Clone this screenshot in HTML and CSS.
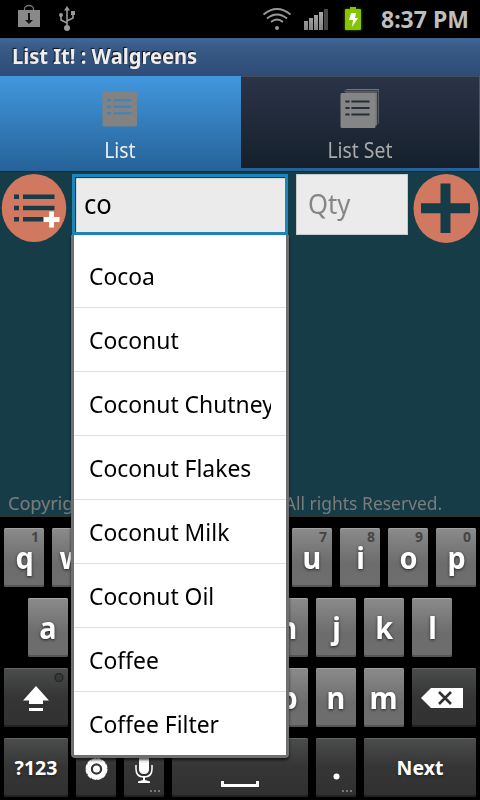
FILE: index.html
```html
<!DOCTYPE html>
<html lang="en">
<head>
<meta charset="utf-8">
<title>List It! : Walgreens</title>
<link rel="stylesheet" href="styles.css">
</head>
<body>
<div class="phone">
  <header class="status">
    <svg class="status-icon" width="90" height="38" viewBox="0 0 90 38">
      <path d="M24.500 10V9a4.500 3.500 0 0 1 9 0v1" fill="none" stroke="#777" stroke-width="1.300"/>
      <path d="M18 10h22v17H18z" fill="#898989"/>
      <path d="M28 13h2v7h3l-4 4-4-4h3z" fill="#111"/>
      <path d="M67 9v17M61 16v4l6 3M73 14v4l-6 3" fill="none" stroke="#999" stroke-width="1.600"/>
      <path d="M67 6l3 4.500h-6zM71 11h4v4h-4z" fill="#999"/>
      <circle cx="61" cy="15" r="2" fill="#999"/><circle cx="67" cy="28" r="3" fill="#999"/>
    </svg>
    <svg class="status-icon" width="110" height="38" viewBox="260 0 110 38">
      <defs>
        <linearGradient id="bars" x1="0" y1="0" x2="0" y2="1"><stop offset="0" stop-color="#aaa"/><stop offset="1" stop-color="#858585"/></linearGradient>
        <filter id="glow" x="-50%" y="-50%" width="200%" height="200%"><feGaussianBlur stdDeviation="1.600"/></filter>
      </defs>
      <g fill="none" stroke="#999" stroke-width="2">
        <path d="M263.500 14.500q13.500-11 27 0M267 18.500q10-8 20 0M271 22q6-5 12 0"/>
      </g>
      <circle cx="277" cy="28" r="2" fill="#999"/>
      <path d="M304 21h4v9h-4zM309 18h4v12h-4zM314 15h4v15h-4zM319 12h4v18h-4z" fill="url(#bars)"/>
      <path d="M324 9h4v21h-4z" fill="#484848"/>
      <path d="M345 9h16v21h-16z" fill="#80c800" opacity=".6" filter="url(#glow)"/>
      <path d="M346 9h4V7h6v2h4q1 0 1 1v19q0 1-1 1h-14q-1 0-1-1V10q0-1 1-1z" fill="#84c400"/>
      <path d="M351 13h5l-1 5h3l-6 9 1-7h-4z" fill="#fff"/>
    </svg>
    <span class="clock">8:37 PM</span>
  </header>
  <div class="titlebar"><h1 class="title">List It! : Walgreens</h1></div>
  <nav class="tabs">
    <div class="tab tab-active">
      <svg class="tab-icon" width="40" height="40" viewBox="0 0 40 40">
        <rect x="2.500" y="2.700" width="34.500" height="34.800" rx="1.500" fill="#828282"/>
        <path d="M7 11.300h4M13.500 11.300h18M7 17.800h4M13.500 17.800h18M7 24.300h4M13.500 24.300h18" stroke="#3f82bd" stroke-width="2"/>
      </svg>
      <span class="tab-label">List</span>
    </div>
    <div class="tab tab-set">
      <svg class="tab-icon" width="40" height="40" viewBox="0 0 40 40">
        <path d="M4 2L7 0h32v34l-3 3z" fill="#707477"/>
        <path d="M3 3h34.500v33M5 1.500h33v33" fill="none" stroke="#252d39" stroke-width=".7"/>
        <rect x=".5" y="4" width="35" height="35" rx="1.500" fill="#858585"/>
        <path d="M6.500 12.500h2M12.500 12.500h16M6.500 19h2M12.500 19h16M6.500 25.500h2M12.500 25.500h16" stroke="#252f3c" stroke-width="2.200" stroke-linecap="square"/>
      </svg>
      <span class="tab-label">List Set</span>
    </div>
  </nav>
  <main class="content">
    <div class="entry">
      <svg class="round" width="66" height="70" viewBox="0 0 66 70">
        <ellipse cx="33" cy="34" rx="32.300" ry="34" fill="#d17860"/>
        <path d="M13 22.700h5M22 22.700h31.500M13 34h5M22 34h31.500M13 45.300h5M22 45.300h22" stroke="#153c47" stroke-width="4.500"/>
        <path d="M50.500 37.500v16M42.500 45.500h16" stroke="#fff" stroke-width="4.800"/>
      </svg>
      <div class="field field-item"><span class="typed">co</span></div>
      <div class="field field-qty"><span class="hint">Qty</span></div>
      <svg class="round round-add" width="66" height="70" viewBox="0 0 66 70">
        <ellipse cx="33" cy="34.500" rx="32.500" ry="34.500" fill="#d17860"/>
        <path d="M32.500 9.500v49.500M8 34.300h49" stroke="#153c47" stroke-width="10"/>
      </svg>
    </div>
    <footer class="copyright"><span class="copy-left">Copyright</span><span class="copy-right">All rights Reserved.</span></footer>
  </main>
  <section class="keyboard">
    <div class="keys">
      <div class="key"><span class="letter">q</span><small>1</small></div><div class="key"><span class="letter">w</span></div><div class="key"></div><div class="key"></div><div class="key"></div><div class="key"></div><div class="key"><span class="letter">u</span><small>7</small></div><div class="key"><span class="letter">i</span><small>8</small></div><div class="key"><span class="letter">o</span><small>9</small></div><div class="key"><span class="letter">p</span><small>0</small></div>
    </div>
    <div class="keys keys-home">
      <div class="key"><span class="letter">a</span></div><div class="key"></div><div class="key"></div><div class="key"></div><div class="key"></div><div class="key"><span class="letter">h</span></div><div class="key"><span class="letter">j</span></div><div class="key"><span class="letter">k</span></div><div class="key"><span class="letter">l</span></div>
    </div>
    <div class="keys">
      <div class="key key-dark key-wide">
        <svg width="64" height="59" viewBox="0 0 64 59"><path d="M32 18l13 14.500h-6V36H25v-3.500h-6zM25 40h14v3H25z" fill="#fff"/><circle cx="55" cy="9.500" r="4" fill="#383838" stroke="#222" stroke-width="1.200"/></svg>
      </div>
      <div class="key"></div><div class="key"></div><div class="key"></div><div class="key"></div><div class="key"><span class="letter">b</span></div><div class="key"><span class="letter">n</span></div><div class="key"><span class="letter">m</span></div>
      <div class="key key-dark key-wide">
        <svg width="64" height="59" viewBox="0 0 64 59"><path d="M9 30l10-10h32v20H19z" fill="#fff"/><path d="M27 24l12 12M39 24L27 36" stroke="#303030" stroke-width="2.600"/></svg>
      </div>
    </div>
    <div class="keys">
      <div class="key key-dark key-wide key-word">?123</div>
      <div class="key key-dark">
        <svg width="40" height="59" viewBox="0 0 40 59"><circle cx="20.500" cy="31" r="8.500" fill="none" stroke="#fff" stroke-width="5" stroke-dasharray="3.800 .65"/><circle cx="20.500" cy="31" r="8" fill="none" stroke="#fff" stroke-width="4.500"/><circle cx="20.500" cy="31" r="3.500" fill="#fff"/></svg>
      </div>
      <div class="key key-dark">
        <svg width="40" height="59" viewBox="0 0 40 59"><rect x="15" y="14" width="10" height="22" rx="4.500" fill="#fff"/><path d="M12 27v4q0 8 8 8t8-8v-4" fill="none" stroke="#fff" stroke-width="1.500"/><path d="M19 38h2v4l5 1.500V45H14v-1.500l5-1.500z" fill="#fff"/><path d="M26 52h2v2h-2zM30 52h2v2h-2zM34 52h2v2h-2z" fill="#777"/></svg>
      </div>
      <div class="key key-dark key-space">
        <svg width="136" height="59" viewBox="0 0 136 59"><path d="M50.500 43v4.500h35V43" fill="none" stroke="#fff" stroke-width="3"/></svg>
      </div>
      <div class="key key-dark">
        <svg width="40" height="59" viewBox="0 0 40 59"><circle cx="20.500" cy="38.500" r="3" fill="#fff"/><path d="M26 52h2v2h-2zM30 52h2v2h-2zM34 52h2v2h-2z" fill="#777"/></svg>
      </div>
      <div class="key key-dark key-next key-word">Next</div>
    </div>
  </section>
  <ul class="suggestions">
    <li class="option"><div class="clip"><span class="option-text">Cocoa</span></div></li>
    <li class="option"><div class="clip"><span class="option-text">Coconut</span></div></li>
    <li class="option"><div class="clip"><span class="option-text">Coconut Chutney</span></div></li>
    <li class="option"><div class="clip"><span class="option-text">Coconut Flakes</span></div></li>
    <li class="option"><div class="clip"><span class="option-text">Coconut Milk</span></div></li>
    <li class="option"><div class="clip"><span class="option-text">Coconut Oil</span></div></li>
    <li class="option"><div class="clip"><span class="option-text">Coffee</span></div></li>
    <li class="option"><div class="clip"><span class="option-text">Coffee Filter</span></div></li>
  </ul>
</div>
</body>
</html>
```

FILE: styles.css
```css
* { box-sizing: border-box; }
body { margin: 0; background: #000; font-family: "Noto Sans", "Open Sans", sans-serif; }
svg { display: block; flex: none; }
.phone { position: relative; width: 480px; height: 800px; overflow: hidden; display: flex; flex-direction: column; }
.status { height: 38px; flex: none; display: flex; align-items: center; background: #000; }
.status-icon + .status-icon { margin-left: 170px; }
.clock { margin-left: 11px; color: #bebebe; font-size: 23px; font-weight: 700; line-height: 38px; white-space: nowrap; }
.titlebar { height: 38px; flex: none; padding-left: 12px; background: linear-gradient(#43669a, #395b87 20%, #2f4c77); border-top: 1px solid #3e608e; }
.title { margin: 0; font-size: 21.500px; line-height: 33px; font-weight: 700; color: #eee; text-shadow: -1px -1px 1px #111; transform: scaleX(.935); transform-origin: left; white-space: nowrap; }
.tabs { height: 95px; flex: none; display: flex; background: #256298; }
.tab { display: flex; flex-direction: column; align-items: center; padding-top: 13px; }
.tab-active { width: 241px; padding-right: 2px; background: linear-gradient(#4297dd, #256298); }
.tab-set { width: 238px; height: 92px; border-top: 1px solid #424b56; background: linear-gradient(#2b3447, #15202c); padding-top: 12px; }
.tab-label { margin-top: 6px; font-size: 22px; line-height: 28px; color: #eee; transform: scaleX(.88); }
.tab-set .tab-label { color: #aaa; }
.content { height: 345px; flex: none; display: flex; flex-direction: column; justify-content: space-between; background: #153c47; border-top: 1px solid #102e3c; }
.entry { display: flex; padding: 2px 1px 0; }
.field { height: 61px; background: #ebebeb; display: flex; align-items: center; }
.field-item { width: 216px; margin-left: 5px; border: 3px solid #1c86bb; padding: 0 0 2px 9px; box-shadow: inset 1px 1px 1px #222; }
.field-qty { width: 112px; margin-left: 8px; border: 1px solid #c6cacc; padding: 0 0 2px 11px; }
.round-add { margin-left: 5px; }
.typed, .hint { font-size: 27px; line-height: 32px; color: #000; transform: scaleX(.95); transform-origin: left; }
.hint { color: #858585; }
.copyright { display: flex; justify-content: space-between; padding: 0 38px 1px 8px; font-size: 18px; line-height: 24px; color: #7c7c7c; white-space: nowrap; }
.copy-left { width: 63px; overflow: hidden; }
.copy-right { transform: scaleX(.97); transform-origin: right; }
.keyboard { flex: 1; background: #000; border-top: 1px solid #333; padding: 11px 4px 0; display: flex; flex-direction: column; gap: 11px; }
.keys { display: flex; gap: 8px; height: 59px; }
.keys-home { padding-left: 24px; }
.key { position: relative; width: 40px; height: 59px; flex: none; display: flex; align-items: center; justify-content: center; border-radius: 2px; background: linear-gradient(#8b8b8b, #6c6c6c 60%, #6e6e6e); box-shadow: inset 0 1px #a2a2a2, inset 0 -2px #555; color: #fff; font-size: 30px; font-weight: 700; line-height: 57px; text-shadow: 0 1px 3px #222; }
.letter { transform: scaleX(.96); }
.key small { position: absolute; right: 5px; top: 0; font-size: 14px; line-height: 17px; color: #454545; text-shadow: none; }
.key-dark { background: linear-gradient(#4b4d4c, #343534 50%, #303130); box-shadow: inset 0 1px #656565, inset 0 -2px #222; padding-top: 0; }
.key-wide { width: 64px; }
.key-space { width: 136px; }
.key-next { width: 112px; }
.key-word { font-size: 19.500px; }
.suggestions { position: absolute; left: 71px; top: 235px; width: 218px; height: 523px; margin: 0; padding: 9px 0 0; list-style: none; background: #fff; border: solid #707070; border-width: 0 3px 3px; border-radius: 0 0 4px 4px; box-shadow: 0 2px 3px rgba(0,0,0,.7); }
.option { height: 64px; padding: 0 15px; border-bottom: 1px solid #e0e0e0; }
.option:last-child { border-bottom: 0; }
.clip { overflow: hidden; white-space: nowrap; height: 62px; }
.option-text { display: inline-block; font-size: 24px; line-height: 63px; color: #000; transform: scaleX(.953); transform-origin: left; }
```
